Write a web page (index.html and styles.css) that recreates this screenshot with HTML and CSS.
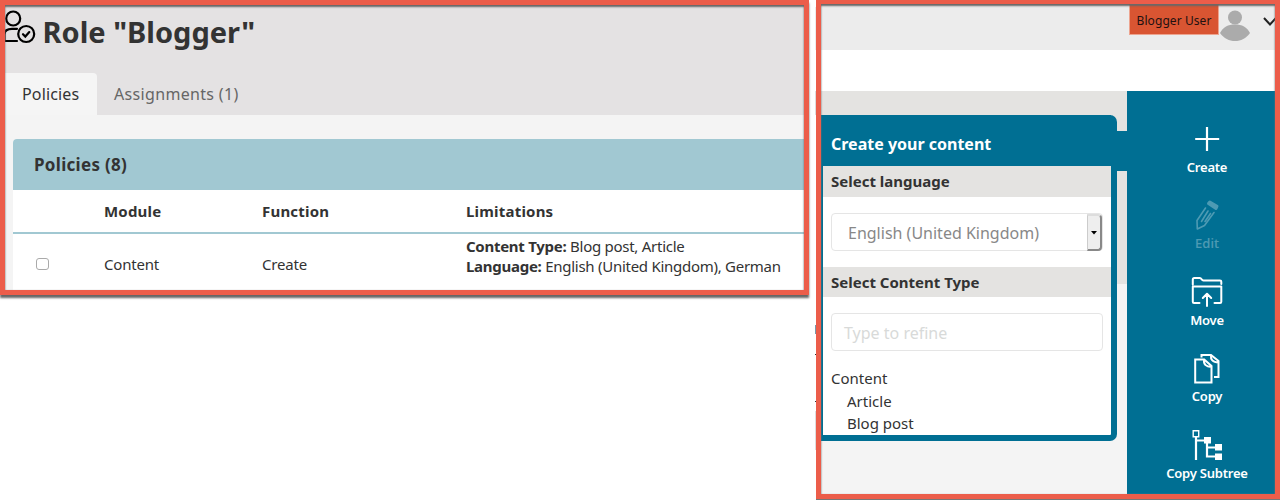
FILE: index.html
```html
<!DOCTYPE html>
<html lang="en">
<head>
<meta charset="utf-8">
<title>Role "Blogger"</title>
<link rel="stylesheet" href="styles.css">
</head>
<body>
<main class="canvas">
  <section class="frame role">
    <header class="role-header">
      <div class="role-title">
        <svg class="role-icon" width="36" height="36" viewBox="0 0 36 36" fill="none" stroke="#000" stroke-width="2.2" stroke-linecap="round">
          <circle cx="13.2" cy="8.500" r="7"/>
          <path d="M17 18.800H12C7 18.800 4.500 20.500 4.500 24.500v6.500H17"/>
          <circle cx="26.200" cy="24" r="8"/>
          <path d="M23 24.200l2.300 2.400 4-4.500"/>
        </svg>
        <h1>Role "Blogger"</h1>
      </div>
      <nav class="tabs">
        <span class="tab active">Policies</span>
        <span class="tab">Assignments (1)</span>
      </nav>
    </header>
    <div class="policies">
      <h2>Policies (8)</h2>
      <div class="row head"><span></span><span>Module</span><span>Function</span><span>Limitations</span></div>
      <div class="row item">
        <span class="check"></span><span class="cell">Content</span><span class="cell">Create</span>
        <div class="limits"><p><b>Content Type:</b> Blog post, Article</p><p><b>Language:</b> English (United Kingdom), German</p></div>
      </div>
    </div>
  </section>

  <div class="edge"></div>

  <section class="frame editor">
    <header class="topbar">
      <span class="user">Blogger User</span>
      <svg class="avatar" width="30" height="31" viewBox="0 0 30 31" fill="#ababab"><circle cx="15" cy="7.500" r="7"/><path d="M0 23C3 17 8 14.500 15 14.500S27 17 30 23C26 28.500 21 31 15 31S4 28.500 0 23z"/></svg>
      <svg class="chevron" width="14" height="9" viewBox="0 0 14 9" fill="none" stroke="#222" stroke-width="2"><path d="M1 1l6 6.500L13 1"/></svg>
    </header>
    <div class="strip"></div>
    <div class="work">
      <div class="stage">
        <div class="create">
          <h2>Create your content</h2>
          <h3>Select language</h3>
          <div class="field-wrap"><div class="select"><span>English (United Kingdom)</span><span class="drop"><svg width="6" height="4" viewBox="0 0 6 4"><path d="M0 0h6L3 3.500z"/></svg></span></div></div>
          <h3 class="type-head">Select Content Type</h3>
          <div class="field-wrap"><div class="refine">Type to refine</div></div>
          <ul class="types"><li class="group">Content</li><li>Article</li><li>Blog post</li></ul>
        </div>
        <div class="connector"></div>
      </div>
      <nav class="actions">
        <div class="action">
          <svg width="32" height="32" viewBox="0 0 32 32" fill="none" stroke="#fff" stroke-width="2.200"><path d="M16 4v24M4.200 16h24"/></svg>
          <span>Create</span>
        </div>
        <div class="action disabled">
          <svg width="32" height="32" viewBox="0 0 32 32" fill="none" stroke="#fff" stroke-width="1.600" stroke-linejoin="round" stroke-linecap="round"><path d="M14.500 9L6 21.500l.3 8.500 7.200-3.500L23 13.500M17 12l-6.500 10.500M19.500 14.500L14 22.500"/><path d="M17.500 4.500L18.800 3 26 7.200 25 9.500z" fill="#fff" stroke-width="3"/></svg>
          <span>Edit</span>
        </div>
        <div class="action">
          <svg width="32" height="32" viewBox="0 0 32 32" fill="none" stroke="#fff" stroke-width="2" stroke-linejoin="round" stroke-linecap="round"><path d="M1.800 8.500V3.500q0-1.500 1.500-1.500h5.500q1 0 1.800 1.200T12.500 4.500H29q1.300 0 1.300 1.300V8M8.500 27H3q-1.200 0-1.200-1.200V10.500h28.500v15.300q0 1.200-1.200 1.200H23.500M16 30V18M11.800 22l4.200-4.200 4.200 4.200"/></svg>
          <span>Move</span>
        </div>
        <div class="action">
          <svg width="32" height="32" viewBox="0 0 32 32" fill="none" stroke="#fff" stroke-width="2"><path d="M4.200 7.500h9l7.300 6.500v16.500H4.200zM13.200 7.500c-1 4.500 1.500 7.500 7.300 7.500"/><path d="M10.500 5.500V3H20l7.500 6v16H23M20 3c-.5 4.500 1.500 7.500 7.500 7.500"/></svg>
          <span>Copy</span>
        </div>
        <div class="action">
          <svg width="32" height="32" viewBox="0 0 32 32" fill="none" stroke="#fff" stroke-width="2"><path d="M2.200 1.800h5.500v6H2.200z" stroke-width="1.400"/><path d="M5 8v23M5 11.500H13M16 13v14.500h8M16 18.500h8" stroke-width="2.200"/><path d="M13 8h7v6.500h-7zM24 15h7v6.500h-7zM24 24.500h7V31h-7z" fill="#fff" stroke="none"/></svg>
          <span>Copy Subtree</span>
        </div>
      </nav>
    </div>
  </section>
</main>
</body>
</html>
```
FILE: styles.css
```css
* { box-sizing: border-box; }
body { margin: 0; background: #fff; font-family: "Noto Sans", sans-serif; color: #333; }
h1, h2, h3, p, ul { margin: 0; padding: 0; }
svg { display: block; flex: none; }
.canvas { display: flex; width: 1280px; height: 500px; overflow: hidden; align-items: flex-start; }
.frame { position: relative; border: 5px solid #ec5d4a; flex: none; white-space: nowrap; box-shadow: 0 3px 2px #666; }
.frame::after { content: ""; position: absolute; inset: 0; box-shadow: inset 0 2px 2px #666, inset 0 0 1px #999; pointer-events: none; }

.role { width: 809px; height: 295px; background: #f4f4f4; overflow: hidden; }
.role-header { height: 110px; background: #e4e2e3; display: flex; flex-direction: column; justify-content: space-between; }
.role-title { display: flex; height: 56px; padding-top: 5px; }
.role-icon { margin-left: -5px; }
h1 { font-size: 29px; line-height: 38px; margin-left: 6.500px; margin-top: 3px; }
.tabs { display: flex; height: 42px; font-size: 16px; }
.tab { line-height: 42px; padding-left: 17px; color: #666; letter-spacing: .33px; }
.tab.active { width: 92px; background: #f5f5f5; color: #333; border-radius: 0 4px 0 0; letter-spacing: .15px; }
.policies { margin: 24px 0 0 8px; background: #fff; height: 151px; border-radius: 4px 0 0; }
.policies h2 { background: #a1c8d2; height: 51px; line-height: 51px; font-size: 17px; letter-spacing: .3px; padding-left: 21px; border-radius: 4px 0 0; }
.row { display: grid; grid-template-columns: 91px 158px 204px 1fr; align-items: center; font-size: 15px; }
.head { height: 44px; border-bottom: 2px solid #a1c8d2; font-weight: bold; letter-spacing: .2px; }
.item { height: 56px; }
.check { width: 13px; height: 12px; border: 1px solid #aaa; border-radius: 3px; margin-left: 23px; margin-top: 4px; }
.cell { margin-top: 4px; letter-spacing: -.2px; }
.limits { font-size: 15px; letter-spacing: -.27px; line-height: 20px; align-self: start; padding-top: 2px; }

.edge { width: 1px; height: 450px; margin: 0 0 0 6px; background: linear-gradient(#fff 7px, #ececec 7px 50px, #fff 50px 91px, #ddd 91px 115px, #fff 115px 325px, #79a 325px 334px, #fff 334px 354px, #333 354px 355px, #fff 355px 401px, #333 401px 402px, #fff 402px 411px, #ddd 411px); }

.editor { width: 464px; height: 499px; border-top-width: 4px; background: #f4f4f4; box-shadow: 0 1px 0 #777; }
.topbar { display: flex; background: #ececec; height: 46px; align-items: flex-start; padding-left: 308px; overflow: hidden; }
.user { flex: none; width: 90px; height: 31px; padding-top: 2px; line-height: 27px; text-align: center; font-size: 12px; letter-spacing: .07px; color: #211; background: #d95532; border: 1px solid #eda48f; }
.avatar { margin: 6px 0 0 1px; }
.chevron { margin: 13px 0 0 13px; }
.strip { height: 41px; background: #fff; }
.work { display: flex; height: 403px; }
.stage { width: 306px; display: flex; align-items: flex-start; padding-top: 24px; background: linear-gradient(#e4e3e1 193px, #f4f4f4 193px); }
.create { width: 296px; height: 326px; border: solid #006f93; border-width: 0 6px 6px 2px; border-radius: 0 7px 7px 0; background: #fff; }
.create h2 { background: #006f93; color: #fff; height: 51px; padding: 4px 0 0 8px; line-height: 51px; font-size: 16px; }
.create h3 { background: #e4e3e1; height: 31px; line-height: 31px; padding-left: 8px; font-size: 15px; }
.create .type-head { height: 30px; }
.field-wrap { height: 70px; padding: 16px 8px 0; }
.select, .refine { height: 38px; border: 1px solid #e5e5e5; border-radius: 4px; font-size: 16px; line-height: 38px; }
.select { display: flex; justify-content: space-between; padding-left: 16px; color: #888; }
.drop { width: 15px; height: 37px; background: #eee; border: solid #888; border-width: 2px 2px 2px 1px; border-top-color: #ddd; border-left-color: #ccc; border-radius: 0 4px 4px 0; display: grid; place-items: center; }
.refine { padding-left: 12px; color: #d8dad9; }
.types { list-style: none; font-size: 15px; line-height: 22px; }
.types li { padding-left: 24px; }
.types .group { padding-left: 8px; line-height: 23px; }
.connector { width: 10px; height: 40px; margin-top: 16px; background: #006f93; }
.actions { width: 148px; background: #006f93; padding-top: 32px; }
.action { height: 76.400px; display: flex; flex-direction: column; align-items: center; color: #fff; font-size: 13px; font-weight: 600; letter-spacing: -.22px; line-height: 20px; padding-left: 12px; }
.action span { margin-top: 2px; }
.disabled svg, .disabled span { opacity: .3; }
.disabled span { font-weight: 500; letter-spacing: 0; }
```
